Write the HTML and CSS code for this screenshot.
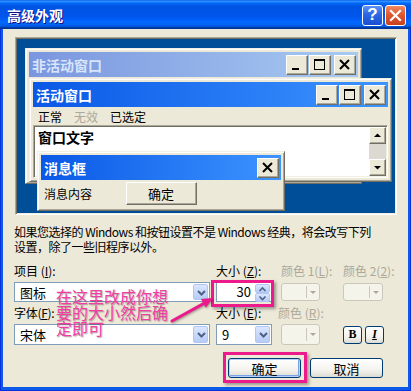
FILE: index.html
```html
<!DOCTYPE html>
<html lang="zh-CN">

<head>
  <meta charset="UTF-8" />
  <title>高级外观</title>
  <link rel="stylesheet" href="styles.css">
</head>

<body>

  <div class="window">
    <div class="titlebar">
      <span class="title">高级外观</span>
      <span class="cap-btn help">?</span>
      <span class="cap-btn close">
        <svg width="13" height="13" viewBox="0 0 13 13"><path d="M2 2l9 9M11 2l-9 9" stroke="#fff" stroke-width="2.2" stroke-linecap="square"/></svg>
      </span>
    </div>

    <div class="content">
      <!-- preview of the window styles -->
      <div class="preview">
        <div class="pwin inactive">
          <div class="pcap">
            <span>非活动窗口</span>
            <span class="pbtns">
              <span class="pbtn"><svg width="20" height="18"><rect x="5" y="12" width="7" height="2"/></svg></span>
              <span class="pbtn"><svg width="20" height="18"><rect x="4.5" y="3.5" width="10" height="10" fill="none" stroke="#000"/><rect x="4" y="3" width="11" height="2"/></svg></span>
              <span class="pbtn gap"><svg width="20" height="18"><path d="M5 4l9 9M14 4l-9 9" stroke="#000" stroke-width="2"/></svg></span>
            </span>
          </div>
        </div>

        <div class="pwin active">
          <div class="pcap">
            <span>活动窗口</span>
            <span class="pbtns">
              <span class="pbtn"><svg width="20" height="18"><rect x="5" y="12" width="7" height="2"/></svg></span>
              <span class="pbtn"><svg width="20" height="18"><rect x="4.5" y="3.5" width="10" height="10" fill="none" stroke="#000"/><rect x="4" y="3" width="11" height="2"/></svg></span>
              <span class="pbtn gap"><svg width="20" height="18"><path d="M5 4l9 9M14 4l-9 9" stroke="#000" stroke-width="2"/></svg></span>
            </span>
          </div>
          <div class="menu">
            <span>正常</span>
            <span class="off">无效</span>
            <span>已选定</span>
          </div>
          <div class="textbox">
            <span class="wtext">窗口文字</span>
            <div class="scroll">
              <span class="sbtn"><svg width="15" height="15"><path d="M4 9h7L7.5 5.5z"/></svg></span>
              <span class="track"></span>
              <span class="sbtn"><svg width="15" height="15"><path d="M4 6h7L7.5 9.5z"/></svg></span>
            </div>
          </div>
        </div>

        <div class="pwin msgbox">
          <div class="pcap">
            <span>消息框</span>
            <span class="pbtns">
              <span class="pbtn"><svg width="20" height="18"><path d="M5 4l9 9M14 4l-9 9" stroke="#000" stroke-width="2"/></svg></span>
            </span>
          </div>
          <div class="msg-body">
            <span class="msg-text">消息内容</span>
            <span class="classic-btn">确定</span>
            <span></span>
          </div>
        </div>
      </div>

      <p class="desc">如果您选择的 Windows 和按钮设置不是 Windows 经典，将会改写下列<br>设置，除了一些旧程序以外。</p>

      <div class="settings">
        <span class="label">项目 (<u>I</u>):</span>
        <span class="label">大小 (<u>Z</u>):</span>
        <span class="label off">颜色 1(<u>L</u>):</span>
        <span class="label off">颜色 2(<u>2</u>):</span>

        <div class="combo wide">
          <span class="combo-text">图标</span>
          <span class="drop"><svg width="15" height="15"><path d="M4 6l3.5 3.5L11 6" fill="none" stroke="#4d6185" stroke-width="2"/></svg></span>
        </div>
        <div class="spin">
          <span class="spin-text">30</span>
          <span class="spin-btns">
            <span class="spin-btn"><svg width="13" height="8"><path d="M3.5 6l3-3 3 3" fill="none" stroke="#4d6185" stroke-width="1.6"/></svg></span>
            <span class="spin-btn"><svg width="13" height="8"><path d="M3.5 2.5l3 3 3-3" fill="none" stroke="#4d6185" stroke-width="1.6"/></svg></span>
          </span>
        </div>
        <div class="color-btn"><span class="swatch"></span><span class="caret"></span></div>
        <div class="color-btn c2"><span class="swatch"></span><span class="caret"></span></div>

        <span class="label tight">字体(<u>F</u>):</span>
        <span class="label">大小 (<u>E</u>):</span>
        <span class="label off shift">颜色 (<u>R</u>):</span>
        <span></span>

        <div class="combo wide tall">
          <span class="combo-text">宋体</span>
          <span class="drop"><svg width="15" height="15"><path d="M4 6l3.5 3.5L11 6" fill="none" stroke="#4d6185" stroke-width="2"/></svg></span>
        </div>
        <div class="combo small tall">
          <span class="combo-text">9</span>
          <span class="drop"><svg width="15" height="15"><path d="M4 6l3.5 3.5L11 6" fill="none" stroke="#4d6185" stroke-width="2"/></svg></span>
        </div>
        <div class="color-btn tall"><span class="swatch"></span><span class="caret"></span></div>
        <div class="styles">
          <span class="xp-btn mini bold">B</span>
          <span class="xp-btn mini ital">I</span>
        </div>
      </div>

      <div class="actions">
        <span class="xp-btn default">确定</span>
        <span class="xp-btn">取消</span>
      </div>
    </div>

    <!-- annotation drawn over the dialog -->
    <div class="mark mark-size"></div>
    <div class="mark mark-ok"></div>
    <p class="note">在这里改成你想<br>要的大小然后确<br>定即可</p>
    <svg class="note-arrow" width="56" height="40" viewBox="0 0 56 40">
      <path d="M7 31L39 13.4" stroke="#ec1a8a" stroke-width="3" stroke-linecap="round"/>
      <path d="M48 8L40.8 17.8L36 9z" fill="#ec1a8a"/>
    </svg>
  </div>

</body>

</html>
```

FILE: styles.css
```css
* {
  box-sizing: border-box;
}

body {
  margin: 0;
  font-family: "Noto Sans CJK SC", sans-serif;
  font-size: 12px;
  color: #000;
  background: #fff;
}

.window {
  position: relative;
  width: 411px;
  height: 391px;
  background: #0b5aea;
  box-shadow: inset 1px 0 #0831d9, inset -1px 0 #0831d9, inset 0 -1px #0831d9;
  display: flex;
  flex-direction: column;
}

/* title bar */
.titlebar {
  height: 29px;
  flex: none;
  display: flex;
  align-items: center;
  padding: 0 5px 0 7px;
  gap: 2px;
  background: linear-gradient(180deg, #0058ee 0%, #3593ff 4%, #288eff 6%, #127dff 8%, #036ffc 10%, #0262ee 14%, #0057e5 20%, #0054e3 24%, #0055eb 56%, #005bf5 66%, #026afe 76%, #0062ef 86%, #0052d6 92%, #0040ab 94%, #003092 100%);
}

.title {
  flex: 1;
  color: #fff;
  font-weight: bold;
  font-size: 14px;
  text-shadow: 1px 1px #0f1089;
}

.cap-btn {
  width: 21px;
  height: 21px;
  margin-top: 1px;
  border: 1px solid #fff;
  border-radius: 3px;
  display: flex;
  align-items: center;
  justify-content: center;
}

.help {
  background: linear-gradient(180deg, #5a93f7 0%, #2b66e3 45%, #1a4fcf 100%);
  color: #fff;
  font-family: "Liberation Sans", sans-serif;
  font-weight: bold;
  font-size: 17px;
}

.close {
  background: linear-gradient(180deg, #f08a63 0%, #e0582f 45%, #c9401f 100%);
}

.content {
  flex: 1;
  margin: 0 3px 4px;
  background: #ece9d8;
  padding: 8px 11px 0 12px;
}

/* preview */
.preview {
  position: relative;
  height: 178px;
  background: #004e98;
  border: 1px solid;
  border-color: #aca899 #fff #fff #aca899;
  box-shadow: inset 1px 1px #716f64, inset -1px -1px #f1efe2;
}

.pwin {
  position: absolute;
  background: #ece9d8;
  border: 1px solid;
  border-color: #f1efe2 #716f64 #716f64 #f1efe2;
  box-shadow: inset 1px 1px #fff, inset -1px -1px #aca899;
  padding: 3px;
  display: flex;
  flex-direction: column;
}

.inactive {
  left: 9px;
  top: 10px;
  width: 337px;
  height: 136px;
}

.active {
  left: 13px;
  top: 40px;
  width: 363px;
  height: 104px;
}

.msgbox {
  left: 21px;
  top: 113px;
  width: 248px;
  height: 60px;
}

.pcap {
  height: 25px;
  flex: none;
  display: flex;
  align-items: center;
  justify-content: space-between;
  padding: 0 2px 0 3px;
  font-weight: bold;
  font-size: 14px;
  color: #fff;
  background: linear-gradient(90deg, #0a58e6, #3d94ff);
}

.inactive .pcap {
  color: #d8e4f8;
  background: linear-gradient(90deg, #7a96df, #a8caf1);
}

.pbtns {
  display: flex;
  gap: 1px;
}

.pbtn {
  width: 22px;
  height: 20px;
  background: #ece9d8;
  border: 1px solid;
  border-color: #fff #716f64 #716f64 #fff;
  box-shadow: inset -1px -1px #aca899;
  display: flex;
}

.pbtn.gap {
  margin-left: 2px;
}

.menu {
  height: 18px;
  flex: none;
  display: flex;
  gap: 12px;
  padding-left: 5px;
  align-items: center;
}

.menu .off {
  color: #aca899;
}

.textbox {
  flex: 1;
  display: flex;
  background: #fff;
  border: 1px solid;
  border-color: #aca899 #fff #fff #aca899;
  box-shadow: inset 1px 1px #716f64, inset -1px -1px #f1efe2;
  padding: 1px;
}

.wtext {
  flex: 1;
  font-weight: bold;
  font-size: 14px;
  line-height: 18px;
  padding: 1px 3px;
}

.scroll {
  width: 17px;
  display: flex;
  flex-direction: column;
}

.sbtn {
  height: 17px;
  background: #ece9d8;
  border: 1px solid;
  border-color: #fff #716f64 #716f64 #fff;
  box-shadow: inset -1px -1px #aca899;
  display: flex;
}

.track {
  flex: 1;
  background: #dcd9d2;
}

.msg-body {
  flex: 1;
  display: grid;
  grid-template-columns: 1fr 71px 1fr;
  align-items: center;
}

.msg-text {
  padding-left: 3px;
}

.classic-btn {
  height: 23px;
  background: #ece9d8;
  border: 1px solid;
  border-color: #fff #716f64 #716f64 #fff;
  box-shadow: inset -1px -1px #aca899;
  text-align: center;
  font-size: 13px;
  line-height: 21px;
}

.desc {
  margin: 9px 0 0 -1px;
  line-height: 15px;
  white-space: nowrap;
  letter-spacing: -0.5px;
}

/* item / font settings */
.settings {
  margin: 8px 0 0 -1px;
  display: grid;
  grid-template-columns: 202px 65px 62px auto;
  grid-template-rows: 18px 20px 18px 21px;
  row-gap: 2px;
  align-items: center;
}

.label {
  line-height: 18px;
  white-space: nowrap;
}

.label.tight {
  letter-spacing: -0.3px;
}

.label.off {
  color: #aca899;
}

.label.shift {
  margin-left: -3px;
}

.combo {
  height: 20px;
  background: #fff;
  border: 1px solid #7f9db9;
  display: flex;
  align-items: center;
  padding: 1px;
}

.combo.tall {
  height: 21px;
}

.combo.wide {
  width: 196px;
}

.combo.small {
  width: 56px;
}

.combo-text {
  flex: 1;
  padding-left: 4px;
  font-size: 13px;
}

.drop,
.spin-btn {
  width: 15px;
  height: 100%;
  border: 1px solid #b1c6f5;
  border-radius: 2px;
  background: linear-gradient(180deg, #dbe6fe, #b7cbf7);
  display: flex;
  align-items: center;
}

.spin {
  width: 56px;
  height: 20px;
  background: #fff;
  border: 1px solid #7f9db9;
  display: flex;
  padding: 1px;
}

.spin-text {
  flex: 1;
  text-align: right;
  padding-right: 4px;
  font-size: 13px;
  line-height: 16px;
}

.spin-btns {
  display: flex;
  flex-direction: column;
  width: 15px;
}

.spin-btn {
  width: 15px;
  height: 9px;
}

.color-btn {
  width: 39px;
  height: 18px;
  border: 1px solid #cac8bb;
  border-radius: 3px;
  background: #f5f4ea;
  display: flex;
  align-items: center;
}

.color-btn.c2 {
  width: 40px;
}

.color-btn.tall {
  height: 21px;
}

.swatch {
  flex: 1;
  height: 70%;
  border-right: 1px solid #cac8bb;
}

.caret {
  width: 12px;
  display: flex;
  justify-content: center;
}

.caret::after {
  content: '';
  border: 3px solid transparent;
  border-top: 3px solid #aca899;
  margin-top: 3px;
}

.styles {
  display: flex;
  gap: 3px;
}

/* XP buttons */
.xp-btn {
  width: 73px;
  height: 20px;
  border: 1px solid #003c74;
  border-radius: 3px;
  background: linear-gradient(180deg, #fff 0%, #f4f3ee 60%, #dcdbd3 100%);
  display: flex;
  align-items: center;
  justify-content: center;
  font-size: 13px;
}

.xp-btn.default {
  box-shadow: inset 0 0 0 1px #b9d1f8, inset -1px -1px 0 1px #7ba2e7;
}

.xp-btn.mini {
  width: 19px;
  height: 18px;
  font-family: "Liberation Serif", serif;
  font-weight: bold;
  font-size: 12px;
}

.xp-btn.ital {
  font-style: italic;
  text-decoration: underline;
}

.actions {
  display: flex;
  justify-content: flex-end;
  gap: 9px;
  margin: 13px 14px 0 0;
}

/* pink annotation */
.mark {
  position: absolute;
  border: 3px solid #ec1a8a;
  box-shadow: 2px 2px 3px rgba(0, 0, 0, 0.35);
}

.mark-size {
  left: 211px;
  top: 280px;
  width: 63px;
  height: 27px;
}

.mark-ok {
  left: 223px;
  top: 352px;
  width: 84px;
  height: 31px;
}

.note {
  position: absolute;
  left: 56px;
  top: 288px;
  margin: 0;
  font-size: 16px;
  line-height: 16px;
  color: #f23ea3;
  text-shadow: 1px 1px 1px rgba(0, 0, 0, 0.3);
}

.note-arrow {
  position: absolute;
  left: 165px;
  top: 290px;
  filter: drop-shadow(1px 1px 1px rgba(0, 0, 0, 0.35));
}
```
